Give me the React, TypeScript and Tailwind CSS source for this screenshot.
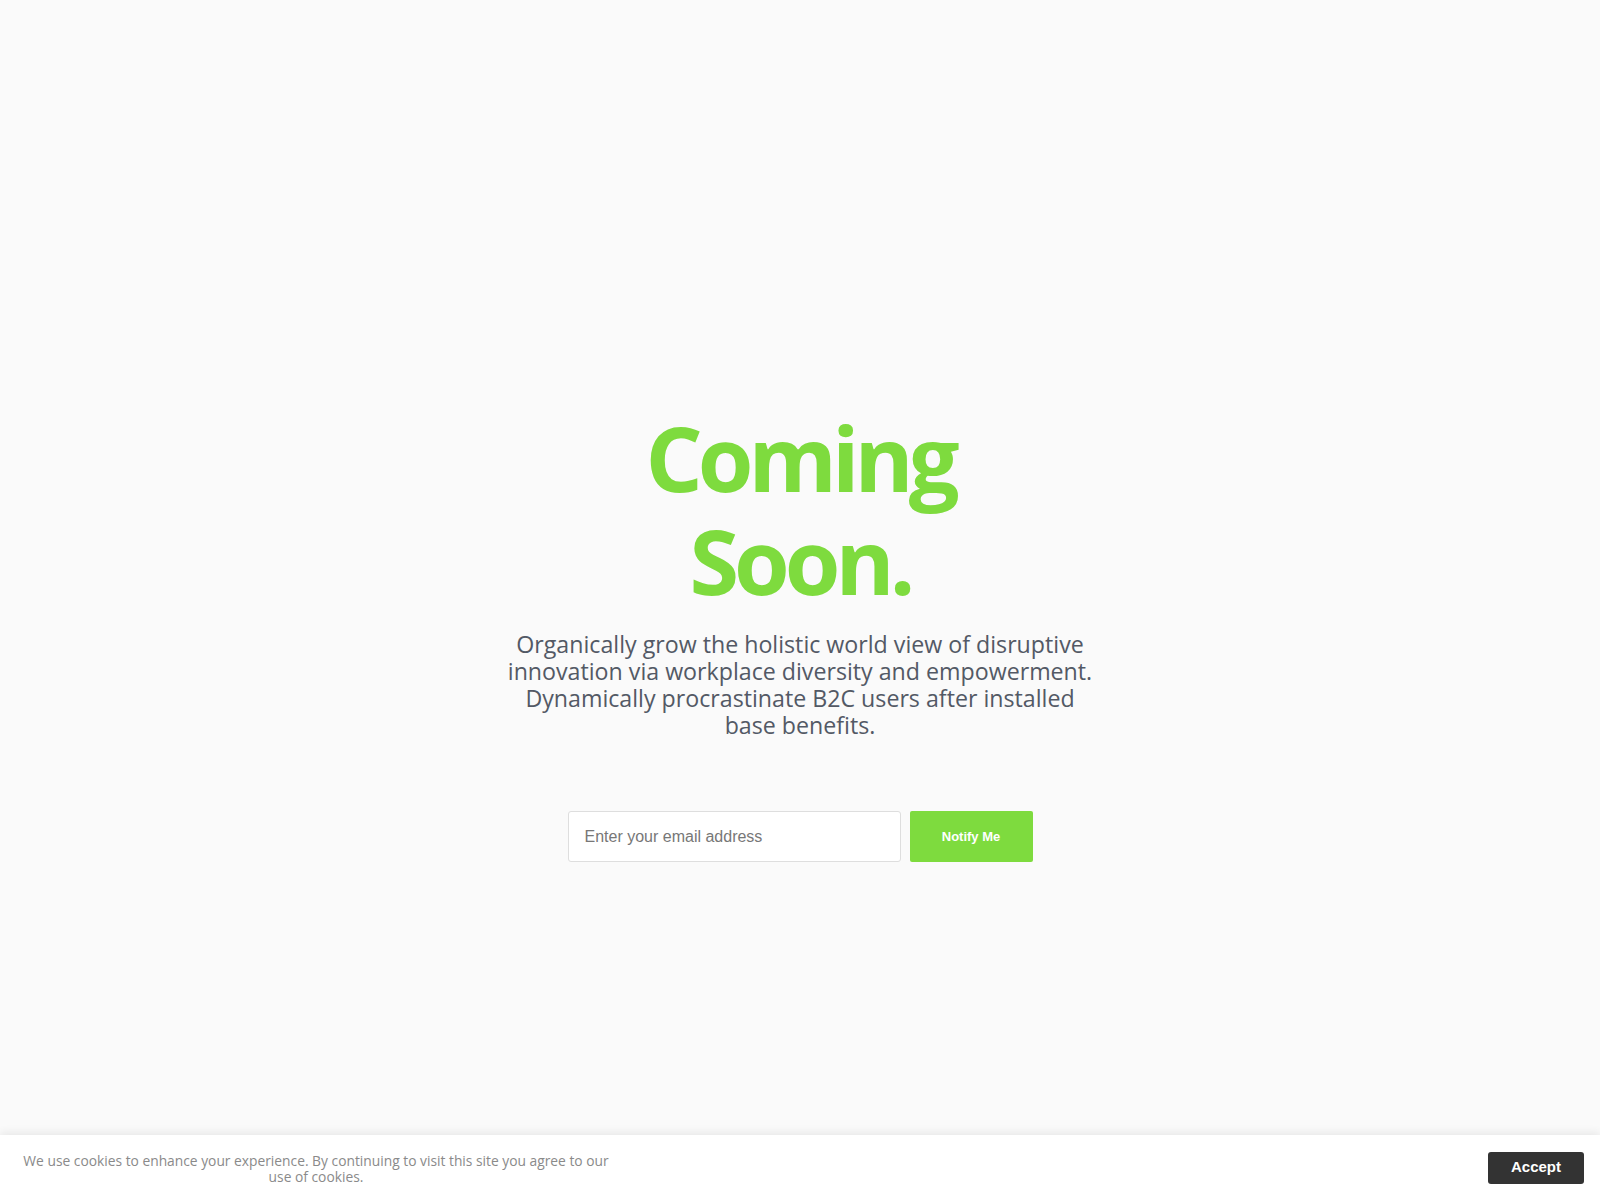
import React, { useState } from 'react';

const App: React.FC = () => {
  const [email, setEmail] = useState('');
  const [showCookies, setShowCookies] = useState(true);

  return (
    <div className="min-h-screen flex flex-col bg-[#fafafa]">
      <main className="flex-1 flex flex-col items-center pt-[406px]">
        <h1 className="text-center text-[90px] leading-[103px] font-bold tracking-[-0.055em] text-[#7edb3e] font-['Open_Sans',sans-serif]">
          <span className="block">Coming</span>
          <span className="block">Soon.</span>
        </h1>
        <p className="mt-[19px] text-center text-[23.2px] leading-[27px] text-[#535965] font-['Open_Sans',sans-serif]">
          Organically grow the holistic world view of disruptive
          <br />
          innovation via workplace diversity and empowerment.
          <br />
          Dynamically procrastinate B2C users after installed
          <br />
          base benefits.
        </p>
        <form
          className="mt-[72px] flex gap-[9px]"
          onSubmit={(e) => {
            e.preventDefault();
            setEmail('');
          }}
        >
          <input
            type="email"
            value={email}
            onChange={(e) => setEmail(e.target.value)}
            placeholder="Enter your email address"
            className="w-[333px] h-[51px] px-4 bg-white border border-[#dedede] rounded-[3px] text-[16px] text-[#444] placeholder:text-[#777] font-['Liberation_Sans',Arial,sans-serif] focus:outline-none"
          />
          <button
            type="submit"
            className="w-[123px] h-[51px] bg-[#7edb3e] rounded-[2px] text-white text-[13px] font-bold font-['Liberation_Sans',Arial,sans-serif]"
          >
            Notify Me
          </button>
        </form>
      </main>
      {showCookies && (
        <div className="h-[65px] bg-white shadow-[0_-3px_8px_rgba(0,0,0,0.07)] flex items-center justify-between px-4">
          <p className="w-[600px] text-center text-[13.8px] leading-[16px] text-[#8a8a8a] font-['Open_Sans',sans-serif] pt-[2px]">
            We use cookies to enhance your experience. By continuing to visit this site you agree to our
            <br />
            use of cookies.
          </p>
          <button
            onClick={() => setShowCookies(false)}
            className="w-[96px] h-[32px] bg-[#333333] rounded-[3px] text-white text-[15px] font-bold font-['Liberation_Sans',Arial,sans-serif]"
          >
            Accept
          </button>
        </div>
      )}
    </div>
  );
};

export default App;
